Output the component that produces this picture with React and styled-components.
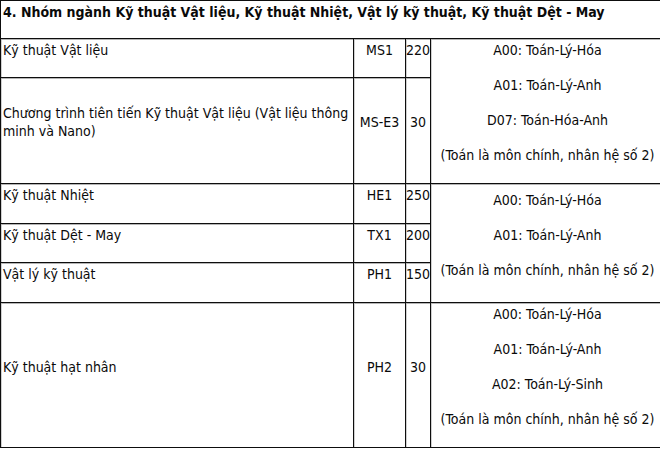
import React from "react";
import styled, { createGlobalStyle } from "styled-components";

const GlobalStyle = createGlobalStyle`
  html, body {
    margin: 0;
    padding: 0;
    background: #ffffff;
    overflow: hidden;
  }
`;

const Table = styled.table`
  width: 664px;
  border-collapse: collapse;
  table-layout: fixed;
  font-family: "DejaVu Sans Condensed", "DejaVu Sans", sans-serif;
  font-stretch: condensed;
  font-size: 14px;
  color: #0a0a0a;
`;

const Row = styled.tr`
  height: ${(p) => p.$h}px;
`;

const Cell = styled.td`
  border: 1px solid #0d0d0d;
  box-shadow: inset 0 1px 0 #b5b5b5, inset 1px 0 0 #d0d0d0;
  padding: 0;
  padding-left: ${(p) => (p.$align === "left" ? "2px" : "0")};
  text-align: ${(p) => p.$align || "center"};
  vertical-align: middle;
  white-space: ${(p) => (p.$nowrap ? "nowrap" : "normal")};
  overflow: visible;
`;

const Title = styled.td`
  border: 1px solid #0d0d0d;
  padding: 1px 0 0 2px;
  font-weight: bold;
  text-align: left;
  vertical-align: middle;
  white-space: nowrap;
`;

const Para = styled.p`
  margin: 0 0 17px;
  line-height: 18px;
`;

const subjects1 = [
  "A00: Toán-Lý-Hóa",
  "A01: Toán-Lý-Anh",
  "D07: Toán-Hóa-Anh",
  "(Toán là môn chính, nhân hệ số 2)",
];
const subjects2 = [
  "A00: Toán-Lý-Hóa",
  "A01: Toán-Lý-Anh",
  "(Toán là môn chính, nhân hệ số 2)",
];
const subjects3 = [
  "A00: Toán-Lý-Hóa",
  "A01: Toán-Lý-Anh",
  "A02: Toán-Lý-Sinh",
  "(Toán là môn chính, nhân hệ số 2)",
];

const List = ({ items }) =>
  items.map((t) => <Para key={t}>{t}</Para>);

export default function App() {
  return (
    <>
      <GlobalStyle />
      <Table>
        <colgroup>
          <col style={{ width: 353 }} />
          <col style={{ width: 52 }} />
          <col style={{ width: 25 }} />
          <col style={{ width: 234 }} />
        </colgroup>
        <tbody>
          <Row $h={38}>
            <Title colSpan={4}>
              <Para>
                4. Nhóm ngành Kỹ thuật Vật liệu, Kỹ thuật Nhiệt, Vật lý kỹ thuật, Kỹ thuật Dệt - May
              </Para>
            </Title>
          </Row>
          <Row $h={39}>
            <Cell $align="left"><Para>Kỹ thuật Vật liệu</Para></Cell>
            <Cell><Para>MS1</Para></Cell>
            <Cell $nowrap><Para>220</Para></Cell>
            <Cell rowSpan={2} $nowrap><List items={subjects1} /></Cell>
          </Row>
          <Row $h={106}>
            <Cell $align="left">
              <Para>Chương trình tiên tiến Kỹ thuật Vật liệu (Vật liệu thông minh và Nano)</Para>
            </Cell>
            <Cell $nowrap><Para>MS-E3</Para></Cell>
            <Cell $nowrap><Para>30</Para></Cell>
          </Row>
          <Row $h={40}>
            <Cell $align="left"><Para>Kỹ thuật Nhiệt</Para></Cell>
            <Cell><Para>HE1</Para></Cell>
            <Cell $nowrap><Para>250</Para></Cell>
            <Cell rowSpan={3} $nowrap><List items={subjects2} /></Cell>
          </Row>
          <Row $h={39}>
            <Cell $align="left"><Para>Kỹ thuật Dệt - May</Para></Cell>
            <Cell><Para>TX1</Para></Cell>
            <Cell $nowrap><Para>200</Para></Cell>
          </Row>
          <Row $h={40}>
            <Cell $align="left"><Para>Vật lý kỹ thuật</Para></Cell>
            <Cell><Para>PH1</Para></Cell>
            <Cell $nowrap><Para>150</Para></Cell>
          </Row>
          <Row $h={145}>
            <Cell $align="left"><Para>Kỹ thuật hạt nhân</Para></Cell>
            <Cell><Para>PH2</Para></Cell>
            <Cell $nowrap><Para>30</Para></Cell>
            <Cell $nowrap><List items={subjects3} /></Cell>
          </Row>
        </tbody>
      </Table>
    </>
  );
}
